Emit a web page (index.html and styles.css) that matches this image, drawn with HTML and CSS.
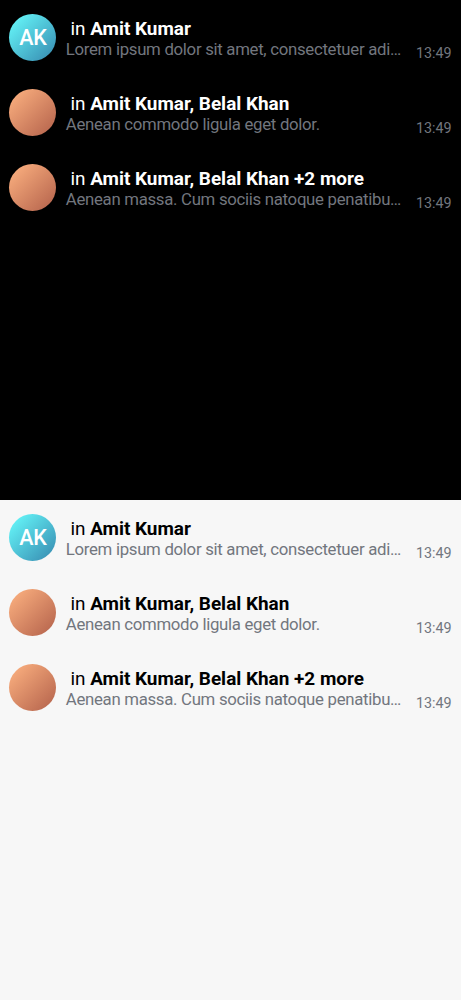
FILE: index.html
```html
<!DOCTYPE html>
<html lang="en">
<head>
<meta charset="utf-8">
<title>Chats</title>
<link rel="stylesheet" href="styles.css">
</head>
<body>
<section class="panel dark">
  <article class="row">
    <div class="avatar teal">AK</div>
    <div class="body"><h2 class="title"><span class="in">in</span> Amit Kumar</h2><p class="message">Lorem ipsum dolor sit amet, consectetuer adi…</p></div>
    <time class="time">13:49</time>
  </article>
  <article class="row">
    <div class="avatar orange"></div>
    <div class="body"><h2 class="title"><span class="in">in</span> Amit Kumar, Belal Khan</h2><p class="message">Aenean commodo ligula eget dolor.</p></div>
    <time class="time">13:49</time>
  </article>
  <article class="row">
    <div class="avatar orange"></div>
    <div class="body"><h2 class="title"><span class="in">in</span> Amit Kumar, Belal Khan +2 more</h2><p class="message">Aenean massa. Cum sociis natoque penatibu…</p></div>
    <time class="time">13:49</time>
  </article>
</section>
<section class="panel light">
  <article class="row">
    <div class="avatar teal">AK</div>
    <div class="body"><h2 class="title"><span class="in">in</span> Amit Kumar</h2><p class="message">Lorem ipsum dolor sit amet, consectetuer adi…</p></div>
    <time class="time">13:49</time>
  </article>
  <article class="row">
    <div class="avatar orange"></div>
    <div class="body"><h2 class="title"><span class="in">in</span> Amit Kumar, Belal Khan</h2><p class="message">Aenean commodo ligula eget dolor.</p></div>
    <time class="time">13:49</time>
  </article>
  <article class="row">
    <div class="avatar orange"></div>
    <div class="body"><h2 class="title"><span class="in">in</span> Amit Kumar, Belal Khan +2 more</h2><p class="message">Aenean massa. Cum sociis natoque penatibu…</p></div>
    <time class="time">13:49</time>
  </article>
</section>
</body>
</html>
```
FILE: styles.css
```css
body { margin: 0; font-family: Roboto, sans-serif; }
.panel { height: 500px; box-sizing: border-box; }
.dark { background: #000; color: #fff; }
.light { background: #f7f7f7; color: #000; }
.row { display: flex; height: 75.2px; box-sizing: border-box; padding: 14px 9.4px 0; }
.avatar { flex: none; width: 47px; height: 47px; border-radius: 50%; text-align: center; line-height: 47px; font-size: 21.5px; font-weight: 500; letter-spacing: -0.4px; color: #fff; }
.teal { background: linear-gradient(135deg, #69ffff 0%, #3587ae 100%); }
.orange { background: linear-gradient(135deg, #ffb482 0%, #b2604a 100%); }
.body { flex: none; width: 340px; margin-left: 9.4px; padding-top: 4px; }
.title { margin: 0 0 0 4.6px; font-size: 18.93px; line-height: 21px; font-weight: 700; white-space: nowrap; }
.in { font-weight: 400; }
.message { margin: 0; font-size: 16.8px; line-height: 20px; letter-spacing: -0.3px; color: #72767e; white-space: nowrap; }
.time { margin-left: auto; padding-top: 31px; font-size: 14.3px; line-height: 16px; color: #72767e; }
```
